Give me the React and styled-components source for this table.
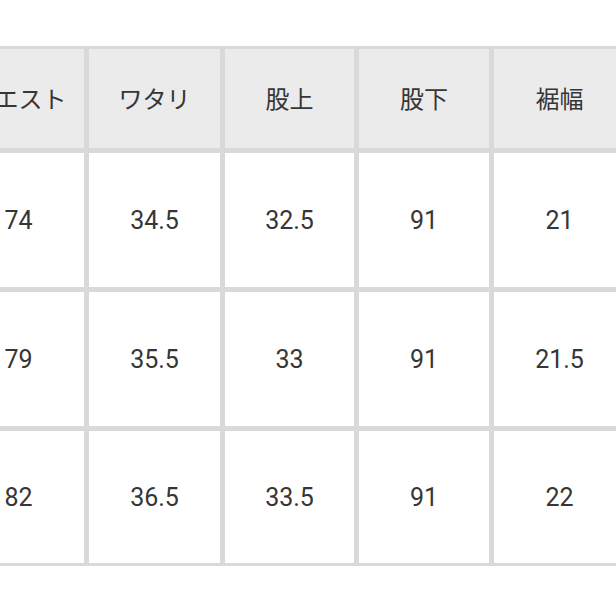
import React from "react";
import styled, { createGlobalStyle } from "styled-components";

const headers = ["ウエスト", "ワタリ", "股上", "股下", "裾幅"];
const rows = [
  ["74", "34.5", "32.5", "91", "21"],
  ["79", "35.5", "33", "91", "21.5"],
  ["82", "36.5", "33.5", "91", "22"],
];

const App = () => {
  return (
    <Page>
      <GlobalStyle />
      <SizeTable>
        {headers.map((h) => (
          <Cell key={h} head>
            {h}
          </Cell>
        ))}
        {rows.map((row, i) =>
          row.map((v, j) => <Cell key={`${i}-${j}`}>{v}</Cell>)
        )}
      </SizeTable>
    </Page>
  );
};

export default App;

const GlobalStyle = createGlobalStyle`
  html, body {
    margin: 0;
    padding: 0;
    background: #ffffff;
  }
`;

const Page = styled.div`
  width: 616px;
  height: 616px;
  overflow: hidden;
  background: #ffffff;
  padding-top: 46px;
  box-sizing: border-box;
  font-family: Roboto, "Noto Sans CJK JP", sans-serif;
`;

const SizeTable = styled.div`
  display: grid;
  grid-template-columns: 131px 131px 129px 130px 131px;
  grid-template-rows: 99px 134px 134px 132px;
  gap: 5px;
  padding: 3px;
  margin-left: -50px;
  width: max-content;
  background: #d9d9d9;
`;

const Cell = styled.div`
  display: flex;
  align-items: center;
  justify-content: center;
  padding-bottom: ${(p) => (p.head ? "3px" : "0")};
  background: ${(p) => (p.head ? "#ebebeb" : "#ffffff")};
  color: #363636;
  font-size: ${(p) => (p.head ? "24px" : "25px")};
  white-space: nowrap;
`;
